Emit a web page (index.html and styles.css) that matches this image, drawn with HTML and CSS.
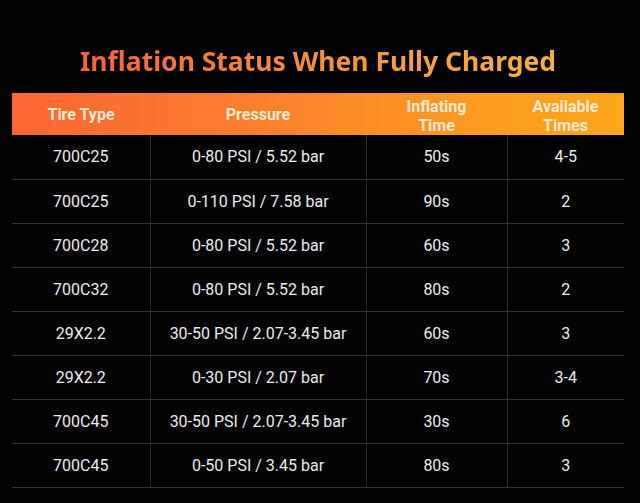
FILE: index.html
```html
<!DOCTYPE html>
<html>
<head>
<meta charset="utf-8">
<link rel="stylesheet" href="styles.css">
</head>
<body>
<div class="page">
  <h1 class="title"><span>Inflation Status When Fully Charged</span></h1>
  <table class="spec">
    <thead>
      <tr>
        <th class="c1">Tire Type</th>
        <th class="c2">Pressure</th>
        <th class="c3">Inflating<br>Time</th>
        <th class="c4">Available<br>Times</th>
      </tr>
    </thead>
    <tbody>
      <tr><td>700C25</td><td>0-80 PSI / 5.52 bar</td><td>50s</td><td>4-5</td></tr>
      <tr><td>700C25</td><td>0-110 PSI / 7.58 bar</td><td>90s</td><td>2</td></tr>
      <tr><td>700C28</td><td>0-80 PSI / 5.52 bar</td><td>60s</td><td>3</td></tr>
      <tr><td>700C32</td><td>0-80 PSI / 5.52 bar</td><td>80s</td><td>2</td></tr>
      <tr><td>29X2.2</td><td>30-50 PSI / 2.07-3.45 bar</td><td>60s</td><td>3</td></tr>
      <tr><td>29X2.2</td><td>0-30 PSI / 2.07 bar</td><td>70s</td><td>3-4</td></tr>
      <tr><td>700C45</td><td>30-50 PSI / 2.07-3.45 bar</td><td>30s</td><td>6</td></tr>
      <tr><td>700C45</td><td>0-50 PSI / 3.45 bar</td><td>80s</td><td>3</td></tr>
    </tbody>
  </table>
</div>
</body>
</html>
```
FILE: styles.css
```css
html, body {
  margin: 0;
  padding: 0;
  background: #030303;
}
.page {
  width: 640px;
  height: 503px;
  padding: 42px 0 0 12px;
  box-sizing: border-box;
  font-family: Roboto, "Noto Sans", sans-serif;
}
.title {
  margin: 0 0 12px 0;
  width: 612px;
  text-align: center;
  font-family: "Noto Sans", sans-serif;
  font-weight: 700;
  font-size: 26.5px;
  line-height: 38px;
  height: 39px;
}
.title span {
  background: linear-gradient(90deg, #f3643b 0%, #f59040 50%, #f6b345 100%);
  -webkit-background-clip: text;
  background-clip: text;
  color: transparent;
}
.spec {
  border-collapse: collapse;
  width: 612px;
  table-layout: fixed;
}
.spec thead tr {
  background: linear-gradient(90deg, #fb6634 0%, #fc7f2c 40%, #fd9a22 75%, #fea71a 100%);
}
.spec th {
  height: 40px;
  padding: 0;
  box-sizing: border-box;
  font-family: Roboto, sans-serif;
  font-weight: 700;
  font-size: 16px;
  line-height: 19px;
  color: #fde9d4;
  vertical-align: middle;
  text-align: center;
}
.spec th.c1 { width: 138px; }
.spec th.c2 { width: 216px; }
.spec th.c3 { width: 141px; padding-top: 4px; }
.spec th.c4 { width: 117px; padding-top: 4px; }
.spec td {
  height: 44px;
  padding: 0;
  box-sizing: border-box;
  text-align: center;
  vertical-align: middle;
  font-size: 16px;
  color: #ececec;
  border-bottom: 1px solid #3a3431;
  border-left: 1px solid #2e2a28;
}
.spec td:first-child { border-left: none; }
```
